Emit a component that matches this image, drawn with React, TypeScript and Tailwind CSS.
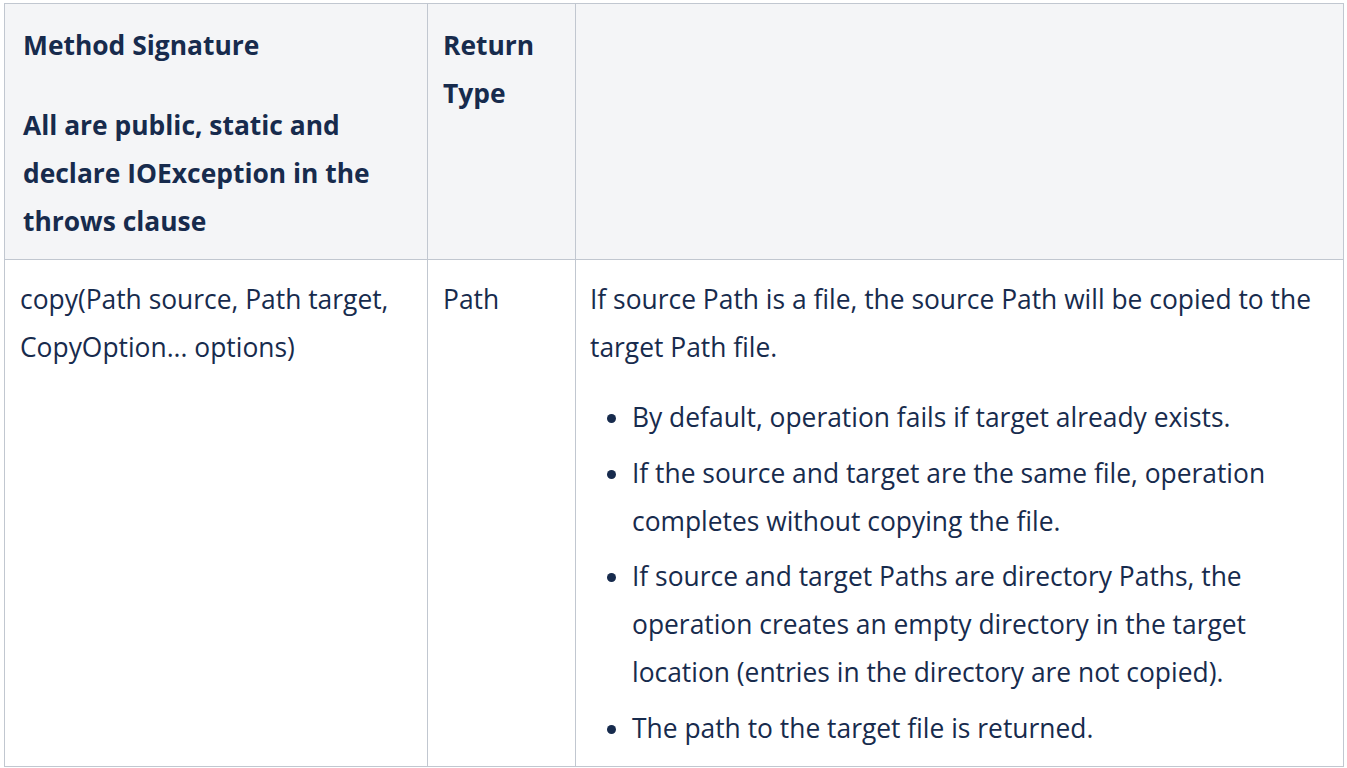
import React from 'react';

const border = 'border border-[#c1c7d0]';

export default function App() {
	return (
		<div className="min-h-screen bg-white pl-[4px] pt-[3px] pr-[3px] text-[#172b4d] font-['Open_Sans',sans-serif] text-[26.4px] leading-[48px]">
			<table className="w-[1340px] border-collapse table-fixed">
				<colgroup>
					<col className="w-[423px]" />
					<col className="w-[148px]" />
					<col />
				</colgroup>
				<thead>
					<tr className="bg-[#f4f5f7]">
						<th className={`${border} align-top text-left font-bold px-[18px] pt-[17px] pb-[14px]`}>
							<p>Method Signature</p>
							<p className="mt-[32px]">All are public, static and declare IOException in the throws clause</p>
						</th>
						<th className={`${border} align-top text-left font-bold px-[15px] pt-[17px] pb-[14px]`}>
							<p>Return Type</p>
						</th>
						<th className={`${border} align-top`}></th>
					</tr>
				</thead>
				<tbody>
					<tr>
						<td className={`${border} align-top px-[15px] pt-[15px] pb-[14px]`}>
							<p>copy(Path source, Path target, CopyOption... options)</p>
						</td>
						<td className={`${border} align-top px-[15px] pt-[15px] pb-[14px]`}>
							<p>Path</p>
						</td>
						<td className={`${border} align-top px-[14px] pt-[15px] pb-[14px]`}>
							<p>If source Path is a file, the source Path will be copied to the target Path file.</p>
							<ul className="mt-[22px] list-disc pl-[42px] flex flex-col gap-[7.5px]">
								<li>By default, operation fails if target already exists.</li>
								<li>If the source and target are the same file, operation completes without copying the file.</li>
								<li>If source and target Paths are directory Paths, the operation creates an empty directory in the target location (entries in the directory are not copied).</li>
								<li>The path to the target file is returned.</li>
							</ul>
						</td>
					</tr>
				</tbody>
			</table>
		</div>
	);
}
